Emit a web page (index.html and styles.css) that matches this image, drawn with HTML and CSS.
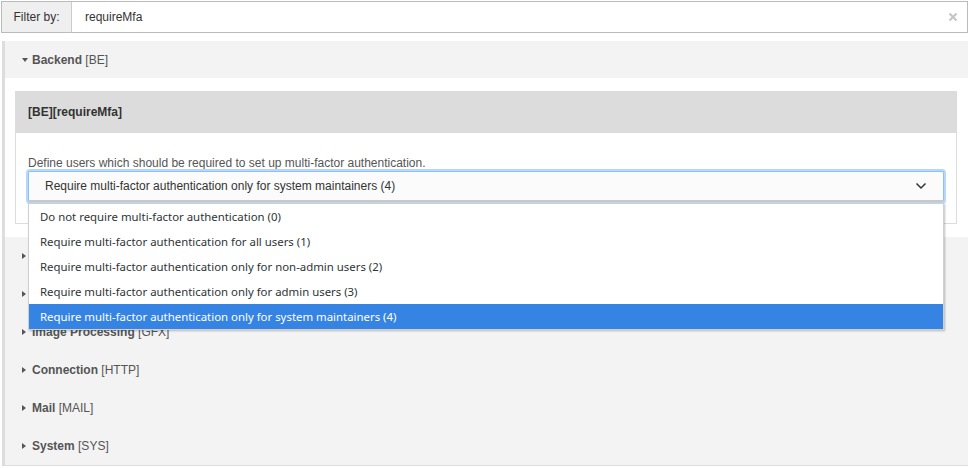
FILE: index.html
```html
<!DOCTYPE html>
<html>
<head>
<meta charset="utf-8">
<link rel="stylesheet" href="styles.css">
</head>
<body>
<div class="filter">
  <span class="filter-label">Filter by:</span>
  <div class="filter-input">
    <span class="filter-value">requireMfa</span>
    <svg class="clear" width="10" height="10" viewBox="0 0 10 10"><path d="M1.5 1.5L8.5 8.5M8.5 1.5L1.5 8.5" stroke="#c4c4c4" stroke-width="2"/></svg>
  </div>
</div>

<div class="panel">
  <div class="section open">
    <div class="section-head"><span class="caret-down"></span><b>Backend</b>&nbsp;[BE]</div>
    <div class="section-body">
      <div class="card">
        <div class="card-head">[BE][requireMfa]</div>
        <div class="card-body">
          <div class="desc">Define users which should be required to set up multi-factor authentication.</div>
          <div class="select-wrap">
            <div class="select">
              <span>Require multi-factor authentication only for system maintainers (4)</span>
              <svg class="chev" width="12" height="8" viewBox="0 0 12 8"><path d="M1.5 1.5L6 6L10.5 1.5" fill="none" stroke="#333" stroke-width="1.5"/></svg>
            </div>
            <ul class="dropdown">
              <li>Do not require multi-factor authentication (0)</li>
              <li>Require multi-factor authentication for all users (1)</li>
              <li>Require multi-factor authentication only for non-admin users (2)</li>
              <li>Require multi-factor authentication only for admin users (3)</li>
              <li class="selected">Require multi-factor authentication only for system maintainers (4)</li>
            </ul>
          </div>
        </div>
      </div>
    </div>
  </div>
  <div class="section"><div class="section-head"><span class="caret-right"></span><b>Database</b>&nbsp;[DB]</div></div>
  <div class="section"><div class="section-head"><span class="caret-right"></span><b>Frontend</b>&nbsp;[FE]</div></div>
  <div class="section"><div class="section-head"><span class="caret-right"></span><b>Image Processing</b>&nbsp;[GFX]</div></div>
  <div class="section"><div class="section-head"><span class="caret-right"></span><b>Connection</b>&nbsp;[HTTP]</div></div>
  <div class="section"><div class="section-head"><span class="caret-right"></span><b>Mail</b>&nbsp;[MAIL]</div></div>
  <div class="section"><div class="section-head"><span class="caret-right"></span><b>System</b>&nbsp;[SYS]</div></div>
</div>
</body>
</html>
```
FILE: styles.css
```css
* { box-sizing: border-box; }
html, body { margin: 0; padding: 0; background: #fff; }
body {
  font-family: "Liberation Sans", Arial, sans-serif;
  font-size: 12px;
  color: #333;
}
.filter {
  display: flex;
  margin: 1px 1px 0 1px;
  height: 32px;
}
.filter-label {
  width: 71px;
  flex: none;
  display: flex;
  align-items: center;
  justify-content: center;
  background: #efefef;
  border: 1px solid #bbb;
  border-right: 1px solid #ccc;
  color: #333;
}
.filter-input {
  flex: 1;
  display: flex;
  align-items: center;
  justify-content: space-between;
  border: 1px solid #bbb;
  border-left: none;
  background: #fff;
  padding: 0 9px 0 13px;
  margin-right: 1px;
}
.filter-value { color: #333; }
.panel {
  margin: 8px 2px 0 2px;
  border-left: 3px solid #ddd;
  border-bottom: 1px solid #ddd;
  background: #f3f3f3;
}
.section-head {
  height: 38px;
  display: flex;
  align-items: center;
  padding-left: 17px;
  color: #555;
}
.section.open .section-head { height: 37px; }
.section-head b { color: #555; }
.caret-down {
  width: 0; height: 0;
  border-left: 3.5px solid transparent;
  border-right: 3.5px solid transparent;
  border-top: 4px solid #555;
  margin-right: 4px;
}
.caret-right {
  width: 0; height: 0;
  border-top: 3.5px solid transparent;
  border-bottom: 3.5px solid transparent;
  border-left: 4px solid #555;
  margin-right: 6px;
}
.section-body {
  background: #fff;
  padding: 13px 11px 13px 10px;
}
.card {
  border: 1px solid #ddd;
  border-top: none;
}
.card-head {
  background: #dcdcdc;
  height: 42px;
  display: flex;
  align-items: center;
  font-weight: bold;
  color: #333;
  margin: 0 -1px;
  padding-left: 13px;
}
.card-body {
  padding: 23px 12px 21px 12px;
}
.desc {
  color: #555;
  line-height: 14px;
  margin-bottom: 1px;
}
.select-wrap { position: relative; }
.select {
  height: 31px;
  display: flex;
  align-items: center;
  justify-content: space-between;
  padding: 0 16px 0 16px;
  background: #fbfbfb;
  border: 1px solid #8fc0f5;
  border-bottom: 2px solid #c8c8c8;
  box-shadow: 0 0 0 2px #b8d8fb;
  border-radius: 2px;
  color: #333;
}
.chev { display: block; }
.dropdown {
  position: absolute;
  left: 0; right: 0;
  top: 32px;
  margin: 0;
  padding: 0;
  list-style: none;
  background: #fff;
  border: 1px solid #d0d0d0;
  box-shadow: 1px 1px 2px rgba(0,0,0,0.25);
  font-family: "Noto Sans", "Open Sans", sans-serif;
  font-size: 11.4px;
  z-index: 5;
}
.dropdown li {
  height: 25px;
  display: flex;
  align-items: center;
  padding-left: 11px;
  color: #2e3436;
}
.dropdown li.selected {
  background: #3584e4;
  color: #fff;
}
```
